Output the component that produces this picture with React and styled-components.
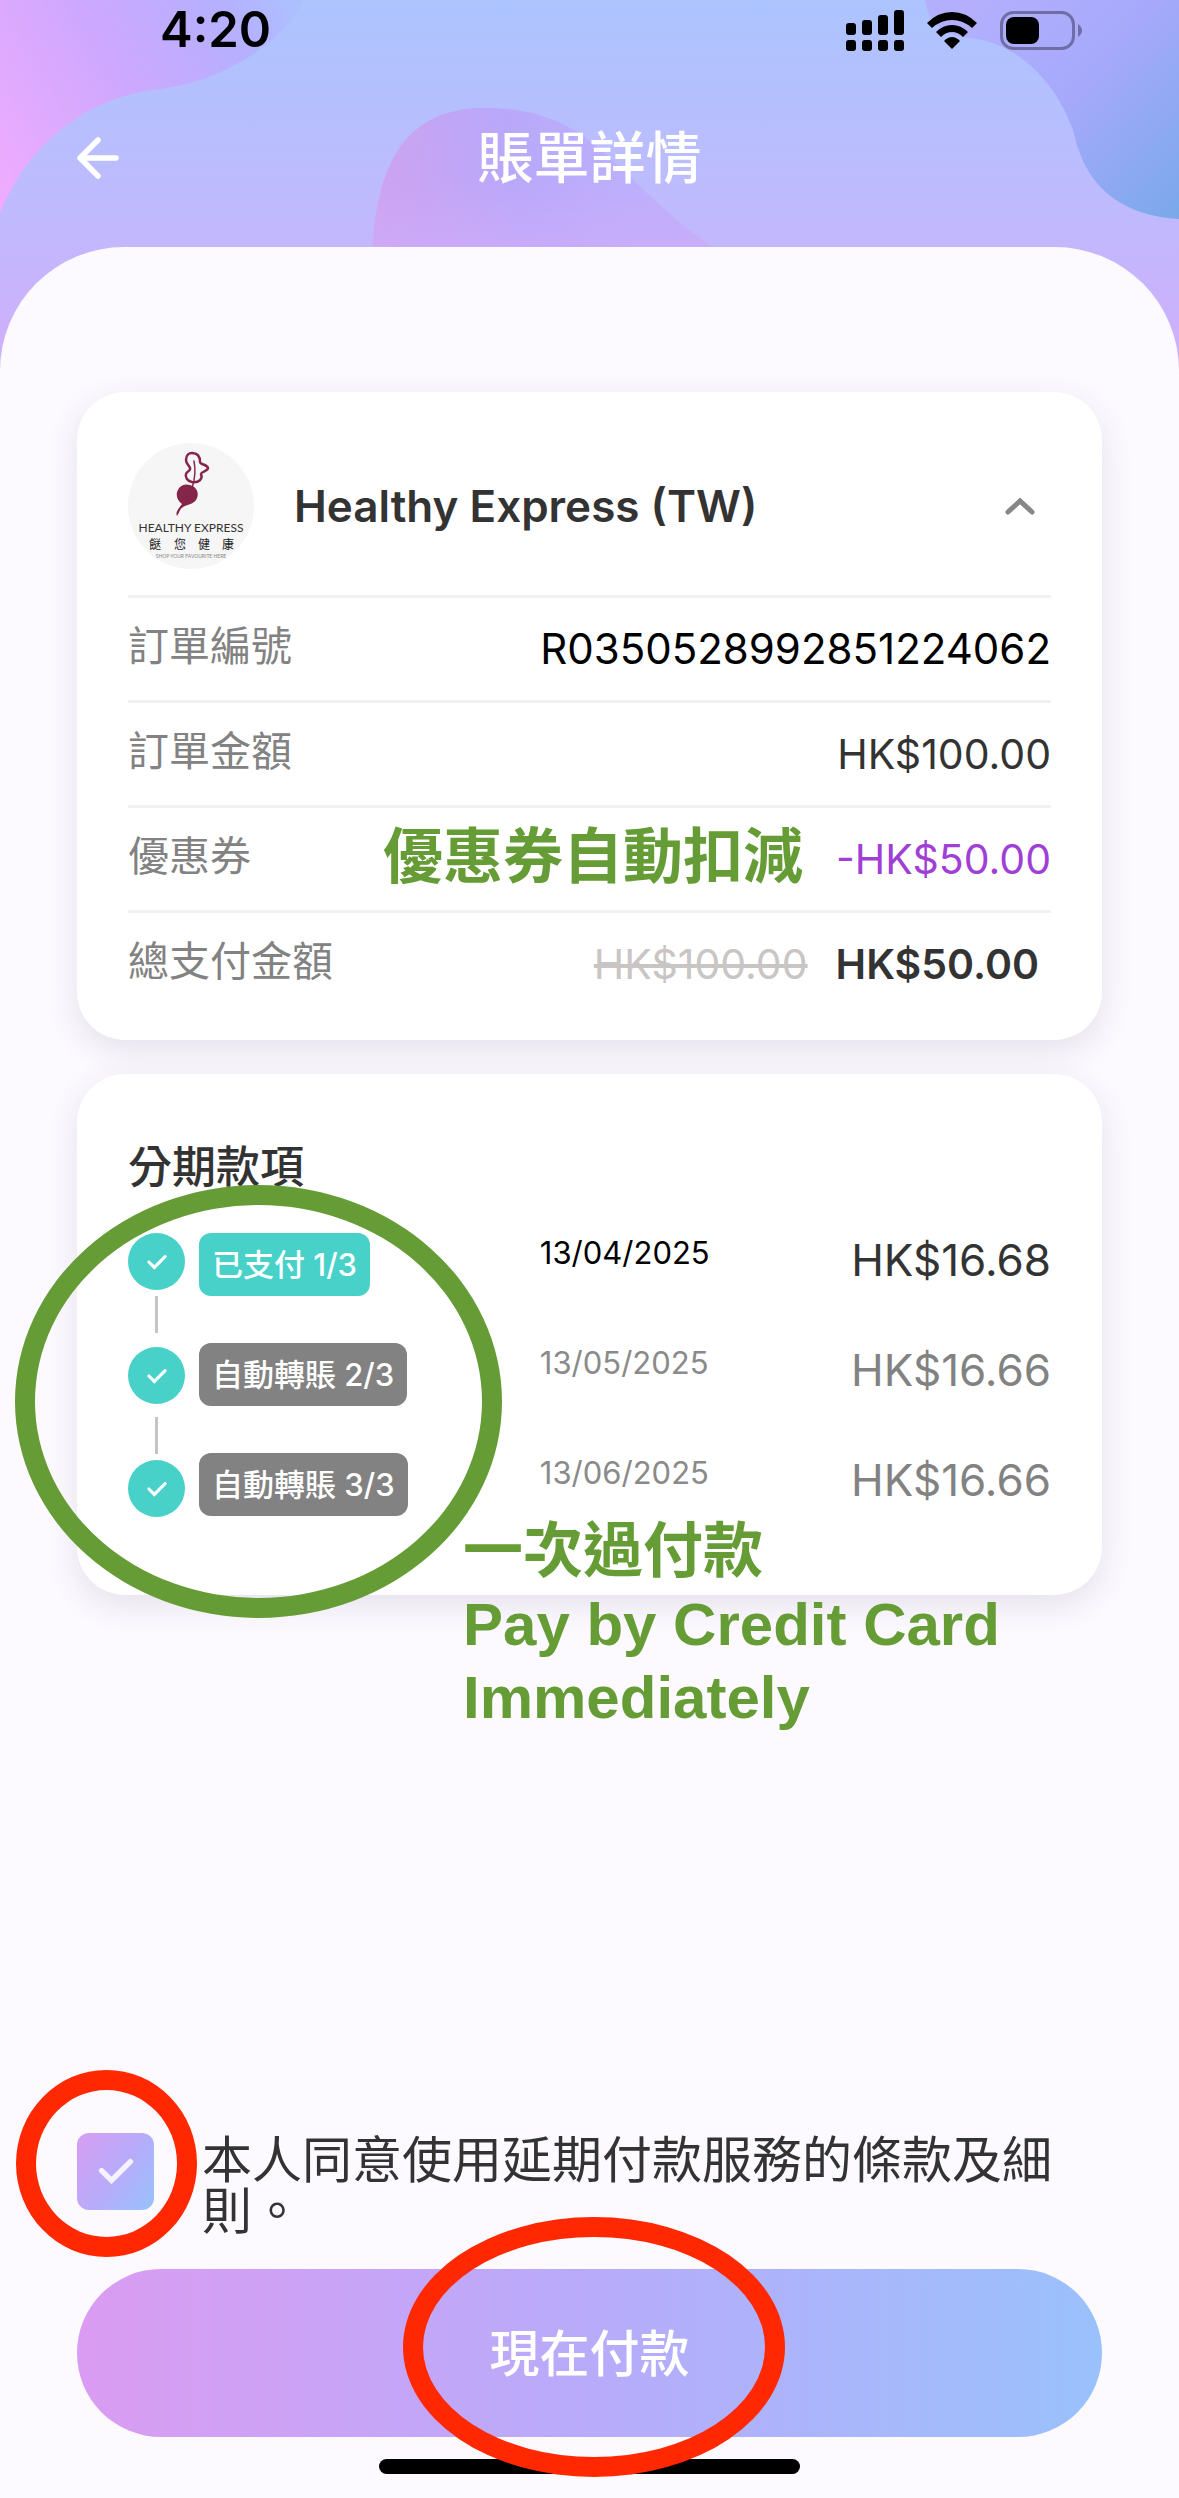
import React, { useState } from "react";
import styled, { createGlobalStyle } from "styled-components";

const GlobalStyle = createGlobalStyle`
  * {
    box-sizing: border-box;
  }
  body {
    margin: 0;
    background: #fcfaff;
    color: #333333;
    font-family: Inter, "Noto Sans CJK TC", sans-serif;
  }
  h1, h2, dl, dd, ol, p {
    margin: 0;
    padding: 0;
  }
`;

// PAGE
const StyledPage = styled.div`
  position: relative;
  display: flex;
  flex-direction: column;
  min-height: 100vh;
  overflow: hidden;
`;
const StyledBackdrop = styled.svg`
  position: absolute;
  top: 0;
  left: 0;
  width: 100%;
  height: 372px;
`;
const StyledHeader = styled.header`
  position: relative;
  height: 247px;
`;
const StyledStatusBar = styled.div`
  display: flex;
  align-items: center;
  justify-content: space-between;
  height: 60px;
  padding: 0 97px 0 160px;
`;
const StyledTime = styled.span`
  font-size: 49px;
  line-height: 60px;
  font-weight: 600;
  color: #000000;
`;
const StyledStatusIcons = styled.div`
  display: flex;
  align-items: center;
  gap: 23px;
`;
const StyledNav = styled.div`
  display: grid;
  grid-template-columns: 1fr auto 1fr;
  align-items: center;
  height: 196px;
  padding: 0 77px;
`;
const StyledBack = styled.button`
  display: flex;
  justify-self: start;
  padding: 0;
  border: 0;
  background: none;
  cursor: pointer;
`;
const StyledTitle = styled.h1`
  font-size: 56px;
  line-height: 64px;
  font-weight: 500;
  color: #ffffff;
`;
const StyledSheet = styled.main`
  position: relative;
  display: flex;
  flex: 1;
  flex-direction: column;
  gap: 34px;
  padding: 145px 77px 24px;
  border-radius: 124px 124px 0 0;
  background: #fcfaff;
`;
const StyledCard = styled.section`
  position: relative;
  padding: ${(p) => p.$padding};
  border-radius: 48px;
  background: #ffffff;
  box-shadow: 0 10px 32px rgba(60, 40, 90, 0.12);
`;

// ORDER
const StyledMerchant = styled.div`
  display: flex;
  align-items: center;
  gap: 40px;
  padding: 0 16px 26px 0;
`;
const StyledMerchantName = styled.h2`
  flex: 1;
  font-size: 44px;
  line-height: 54px;
  font-weight: 600;
`;
const StyledToggle = styled.button`
  display: flex;
  padding: 0;
  border: 0;
  background: none;
  cursor: pointer;
`;
const StyledRow = styled.div`
  display: flex;
  align-items: center;
  height: 105px;
  border-top: 3px solid #f1f1f1;
`;
const StyledLabel = styled.dt`
  flex: 1;
  padding-bottom: 6px;
  font-size: 41px;
  line-height: 54px;
  color: #828282;
`;
const StyledValue = styled.dd`
  font-size: 41px;
  line-height: 54px;
  font-weight: ${(p) => (p.$bold ? 600 : 400)};
  color: ${(p) => p.$color || "#333333"};
  padding-right: ${(p) => (p.$bold ? 12 : 0)}px;
`;
const StyledOrderNumber = styled(StyledValue)`
  font-size: 42px;
`;
const StyledOldPrice = styled.s`
  margin-right: 28px;
  font-weight: 400;
  color: #c9c5c5;
`;
const StyledRowNote = styled.span`
  margin-right: 33px;
  padding-bottom: 6px;
  font-size: 60px;
  line-height: 73px;
  font-weight: 700;
  color: #669c35;
`;

// INSTALMENTS
const StyledSectionTitle = styled.h2`
  margin-bottom: 39px;
  font-size: 44px;
  line-height: 54px;
  font-weight: 500;
`;
const StyledSchedule = styled.div`
  display: flex;
  gap: 14px;
`;
const StyledTrack = styled.div`
  display: flex;
  flex-direction: column;
  align-items: center;
`;
const StyledDot = styled.span`
  display: flex;
  align-items: center;
  justify-content: center;
  width: 57px;
  height: 57px;
  border-radius: 50%;
  background: #47d1c8;
`;
const StyledConnector = styled.span`
  width: 3px;
  height: 37px;
  margin: ${(p) => (p.$last ? "13px 0 6px" : "6px 0 14px")};
  background: #c4c4c4;
`;
const StyledInstalments = styled.ol`
  display: flex;
  flex: 1;
  flex-direction: column;
  gap: 47px;
  list-style: none;
`;
const StyledInstalment = styled.li`
  display: grid;
  grid-template-columns: 2fr 3fr;
  height: 63px;
`;
const StyledBadge = styled.span`
  justify-self: start;
  padding: 0 13px;
  border-radius: 12px;
  background: ${(p) => (p.$paid ? "#47d1c8" : "#828282")};
  font-size: 31px;
  line-height: 63px;
  font-weight: 500;
  color: #ffffff;
`;
const StyledWhen = styled.div`
  display: flex;
  align-items: flex-start;
  justify-content: space-between;
`;
const StyledDate = styled.time`
  font-size: 31px;
  line-height: 40px;
  color: ${(p) => (p.$paid ? "#000000" : "#8a8a8a")};
`;
const StyledAmount = styled.span`
  font-size: 44px;
  line-height: 54px;
  color: ${(p) => (p.$paid ? "#333333" : "#828282")};
`;

// MARKS drawn over the page
const StyledRing = styled.span`
  position: absolute;
  z-index: 2;
  border: 20px solid ${(p) => p.$color};
  border-radius: 50%;
  pointer-events: none;
`;
const StyledScheduleRing = styled(StyledRing)`
  top: 111px;
  left: -62px;
  width: 487px;
  height: 433px;
`;
const StyledConsentRing = styled(StyledRing)`
  top: -63px;
  left: -61px;
  width: 181px;
  height: 187px;
`;
const StyledPayRing = styled(StyledRing)`
  top: -52px;
  left: calc(50% - 187px);
  width: 382px;
  height: 260px;
`;
const StyledCallout = styled.p`
  position: absolute;
  top: 441px;
  left: 386px;
  z-index: 2;
  font-family: "Liberation Sans", "Noto Sans CJK TC", sans-serif;
  font-size: 60px;
  line-height: 73px;
  font-weight: 700;
  color: #669c35;
  white-space: nowrap;
`;

// FOOTER
const StyledFooter = styled.footer`
  display: flex;
  flex-direction: column;
  align-items: center;
  margin-top: auto;
`;
const StyledConsent = styled.div`
  display: flex;
  align-items: flex-start;
  gap: 48px;
  width: 100%;
  margin-bottom: 32px;
`;
const StyledCheckWrap = styled.span`
  position: relative;
  display: grid;
  place-items: center;
`;
const StyledCheckbox = styled.input`
  grid-area: 1 / 1;
  appearance: none;
  width: 77px;
  height: 77px;
  margin: 0;
  border-radius: 12px;
  background: linear-gradient(125deg, #d79df2, #b9abfa 50%, #97c1fb);
`;
const StyledCheckMark = styled.svg`
  grid-area: 1 / 1;
  pointer-events: none;
`;
const StyledConsentText = styled.label`
  flex: 1;
  padding-top: 2px;
  font-size: 50px;
  line-height: 51px;
`;
const StyledPayWrap = styled.div`
  position: relative;
  width: 100%;
  margin-bottom: 22px;
`;
const StyledPay = styled.button`
  width: 100%;
  height: 168px;
  padding: 0 0 6px;
  border: 0;
  border-radius: 84px;
  background: linear-gradient(90deg, #da9cf2, #b8abfa 50%, #9ac1fb);
  font-family: inherit;
  font-size: 50px;
  font-weight: 500;
  color: #ffffff;
  cursor: pointer;
`;
const StyledHomeBar = styled.div`
  width: 41%;
  height: 15px;
  border-radius: 8px;
  background: #000000;
`;

const instalments = [
  { label: "已支付", part: "1/3", date: "13/04/2025", amount: "HK$16.68", paid: true },
  { label: "自動轉賬", part: "2/3", date: "13/05/2025", amount: "HK$16.66" },
  { label: "自動轉賬", part: "3/3", date: "13/06/2025", amount: "HK$16.66" },
];

function Backdrop() {
  return (
    <StyledBackdrop viewBox="0 0 1179 372" preserveAspectRatio="none">
      <defs>
        <linearGradient id="sky" x1="0" y1="0" x2="0" y2="1">
          <stop offset="0" stopColor="#acc4ff" />
          <stop offset="0.42" stopColor="#babdfe" />
          <stop offset="0.66" stopColor="#c3b7fd" />
          <stop offset="1" stopColor="#d0aefc" />
        </linearGradient>
        <linearGradient
          id="pink"
          gradientUnits="userSpaceOnUse"
          x1="-20"
          y1="190"
          x2="290"
          y2="10"
        >
          <stop offset="0" stopColor="#f2acff" />
          <stop offset="0.5" stopColor="#cda8fe" />
          <stop offset="0.85" stopColor="#b5b0ff" />
          <stop offset="1" stopColor="#aebfff" />
        </linearGradient>
        <linearGradient
          id="blue"
          gradientUnits="userSpaceOnUse"
          x1="960"
          y1="20"
          x2="1179"
          y2="219"
        >
          <stop offset="0" stopColor="#b3affd" />
          <stop offset="0.45" stopColor="#a6a9fb" />
          <stop offset="1" stopColor="#79a9ea" />
        </linearGradient>
        <linearGradient
          id="hill"
          gradientUnits="userSpaceOnUse"
          x1="373"
          y1="230"
          x2="620"
          y2="180"
        >
          <stop offset="0" stopColor="#cfa2f0" />
          <stop offset="0.6" stopColor="#b9a8fa" />
          <stop offset="1" stopColor="#bcaffc" />
        </linearGradient>
        <linearGradient id="hillFade" x1="0" y1="0" x2="0" y2="1">
          <stop offset="0.5" stopColor="#cdacfa" stopOpacity="0" />
          <stop offset="1" stopColor="#cdacfa" stopOpacity="0.7" />
        </linearGradient>
      </defs>
      <rect width="1179" height="372" fill="url(#sky)" />
      <path
        d="M0 0H303C292 30 235 80 160 89C85 97 28 145 0 213Z"
        fill="url(#pink)"
      />
      <path
        d="M925 0C928 20 940 35 970 38C1015 42 1055 80 1073 130C1084 182 1115 215 1179 219V0Z"
        fill="url(#blue)"
      />
      <path
        d="M373 247C378 150 415 108 485 108C595 108 610 175 712 247Z"
        fill="url(#hill)"
      />
      <path
        d="M373 247C378 150 415 108 485 108C595 108 610 175 712 247Z"
        fill="url(#hillFade)"
      />
    </StyledBackdrop>
  );
}

function SignalIcon() {
  return (
    <svg width="58" height="41" viewBox="0 0 58 41">
      <rect x="0" y="13" width="10" height="12" rx="3" />
      <rect x="16" y="10" width="10" height="15" rx="3" />
      <rect x="32" y="5" width="10" height="20" rx="3" />
      <rect x="48" y="0" width="10" height="25" rx="3" />
      <rect x="0" y="30" width="10" height="11" rx="3" />
      <rect x="16" y="30" width="10" height="11" rx="3" />
      <rect x="32" y="30" width="10" height="11" rx="3" />
      <rect x="48" y="30" width="10" height="11" rx="3" />
    </svg>
  );
}

function WifiIcon() {
  return (
    <svg width="50" height="37" viewBox="0 0 50 37">
      <path d="M0 11Q11 0 25 0Q39 0 50 11L45 16Q36 8 25 8Q14 8 5 16Z" />
      <path d="M9 20Q16 13 25 13Q34 13 41 20L36 25Q31 20 25 20Q19 20 14 25Z" />
      <path d="M17 29Q21 25 25 25Q29 25 33 29L25 37Z" />
    </svg>
  );
}

function BatteryIcon() {
  return (
    <svg width="82" height="39" viewBox="0 0 82 39">
      <rect
        x="1.5"
        y="1.5"
        width="72"
        height="36"
        rx="12"
        fill="none"
        stroke="#6f6da6"
        strokeWidth="3"
      />
      <rect x="6" y="6" width="33" height="27" rx="8" />
      <path d="M78 13Q82 16 82 19.500Q82 23 78 26Z" fill="#6f6da6" />
    </svg>
  );
}

function CheckIcon() {
  return (
    <svg width="22" height="18" viewBox="0 0 24 20">
      <path
        d="M3 10L9 16L21 4"
        fill="none"
        stroke="#ffffff"
        strokeWidth="3.500"
        strokeLinecap="round"
      />
    </svg>
  );
}

function MerchantLogo() {
  return (
    <svg width="126" height="126" viewBox="0 0 126 126" role="img" aria-label="Healthy Express">
      <circle cx="63" cy="63" r="63" fill="#f6f6f6" />
      <g fill="none" stroke="#86254a" strokeLinecap="round">
        <path
          d="M64 39C59 38 57 34 58 31C59 28 63 28 62 25C61 22 58 21 58 17C58 12 61 10 64 10C69 10 72 13 72 19C72 22 79 21 80 25C80 28 73 29 73 31C75 36 71 40 64 39Z"
          strokeWidth="2.500"
        />
        <path d="M66 18C68 28 67 36 64 45" strokeWidth="1.500" />
      </g>
      <path
        d="M62 42C69 44 71 50 69 55C67 61 60 61 55 64C51 67 52 69 49 73C47 69 51 65 54 61C50 58 48 54 49 49C51 43 56 40 62 42Z"
        fill="#86254a"
      />
      <text
        x="63"
        y="89"
        textAnchor="middle"
        fontSize="12"
        fontFamily="Lato"
        fill="#333333"
      >
        HEALTHY EXPRESS
      </text>
      <text
        x="21 46 70 94"
        y="106"
        fontSize="12"
        fontFamily="Noto Sans CJK TC"
        fill="#222222"
      >
        餸您健康
      </text>
      <text x="63" y="115" textAnchor="middle" fontSize="5" fontFamily="Lato" fill="#888888">
        SHOP YOUR FAVOURITE HERE
      </text>
    </svg>
  );
}

export default function App() {
  const [open, setOpen] = useState(true);
  const [agreed, setAgreed] = useState(true);

  return (
    <StyledPage>
      <GlobalStyle />
      <Backdrop />
      <StyledHeader>
        <StyledStatusBar>
          <StyledTime>4:20</StyledTime>
          <StyledStatusIcons>
            <SignalIcon />
            <WifiIcon />
            <BatteryIcon />
          </StyledStatusIcons>
        </StyledStatusBar>
        <StyledNav>
          <StyledBack aria-label="返回">
            <svg width="42" height="42" viewBox="0 0 42 42">
              <path
                d="M39 21H3M21 3L3 21L21 39"
                fill="none"
                stroke="#ffffff"
                strokeWidth="5.500"
                strokeLinecap="round"
                strokeLinejoin="round"
              />
            </svg>
          </StyledBack>
          <StyledTitle>賬單詳情</StyledTitle>
        </StyledNav>
      </StyledHeader>

      <StyledSheet>
        <StyledCard $padding="51px 51px 25px">
          <StyledMerchant>
            <MerchantLogo />
            <StyledMerchantName>Healthy Express (TW)</StyledMerchantName>
            <StyledToggle
              aria-label="訂單資料"
              aria-expanded={open}
              onClick={() => setOpen(!open)}
            >
              <svg width="30" height="18" viewBox="0 0 30 18">
                <path
                  d="M3 15L15 4L27 15"
                  fill="none"
                  stroke="#868686"
                  strokeWidth="5"
                  strokeLinecap="round"
                />
              </svg>
            </StyledToggle>
          </StyledMerchant>
          {open && (
            <dl>
              <StyledRow>
                <StyledLabel>訂單編號</StyledLabel>
                <StyledOrderNumber $color="#000000">
                  R0350528992851224062
                </StyledOrderNumber>
              </StyledRow>
              <StyledRow>
                <StyledLabel>訂單金額</StyledLabel>
                <StyledValue>HK$100.00</StyledValue>
              </StyledRow>
              <StyledRow>
                <StyledLabel>優惠券</StyledLabel>
                <StyledRowNote>優惠券自動扣減</StyledRowNote>
                <StyledValue $color="#a03fd6">-HK$50.00</StyledValue>
              </StyledRow>
              <StyledRow>
                <StyledLabel>總支付金額</StyledLabel>
                <StyledValue $bold>
                  <StyledOldPrice>HK$100.00</StyledOldPrice>
                  HK$50.00
                </StyledValue>
              </StyledRow>
            </dl>
          )}
        </StyledCard>

        <StyledCard $padding="66px 51px 78px">
          <StyledSectionTitle>分期款項</StyledSectionTitle>
          <StyledSchedule>
            <StyledTrack>
              {instalments.map((e, i) => (
                <React.Fragment key={e.part}>
                  {i > 0 && <StyledConnector $last={i === 2} />}
                  <StyledDot>
                    <CheckIcon />
                  </StyledDot>
                </React.Fragment>
              ))}
            </StyledTrack>
            <StyledInstalments>
              {instalments.map((e) => (
                <StyledInstalment key={e.part}>
                  <StyledBadge $paid={e.paid}>
                    {e.label} {e.part}
                  </StyledBadge>
                  <StyledWhen>
                    <StyledDate $paid={e.paid}>{e.date}</StyledDate>
                    <StyledAmount $paid={e.paid}>{e.amount}</StyledAmount>
                  </StyledWhen>
                </StyledInstalment>
              ))}
            </StyledInstalments>
          </StyledSchedule>
          <StyledScheduleRing $color="#669c35" />
          <StyledCallout>
            一次過付款
            <br />
            Pay by Credit Card
            <br />
            Immediately
          </StyledCallout>
        </StyledCard>

        <StyledFooter>
          <StyledConsent>
            <StyledCheckWrap>
              <StyledCheckbox
                id="agree"
                type="checkbox"
                checked={agreed}
                onChange={(e) => setAgreed(e.target.checked)}
              />
              {agreed && (
                <StyledCheckMark width="36" height="27" viewBox="0 0 40 30">
                  <path
                    d="M4 14L15 25L36 4"
                    fill="none"
                    stroke="#f6f0ff"
                    strokeWidth="6"
                    strokeLinecap="round"
                  />
                </StyledCheckMark>
              )}
              <StyledConsentRing $color="#ff2800" />
            </StyledCheckWrap>
            <StyledConsentText htmlFor="agree">
              本人同意使用延期付款服務的條款及細則。
            </StyledConsentText>
          </StyledConsent>
          <StyledPayWrap>
            <StyledPay>現在付款</StyledPay>
            <StyledPayRing $color="#ff2800" />
          </StyledPayWrap>
          <StyledHomeBar />
        </StyledFooter>
      </StyledSheet>
    </StyledPage>
  );
}
